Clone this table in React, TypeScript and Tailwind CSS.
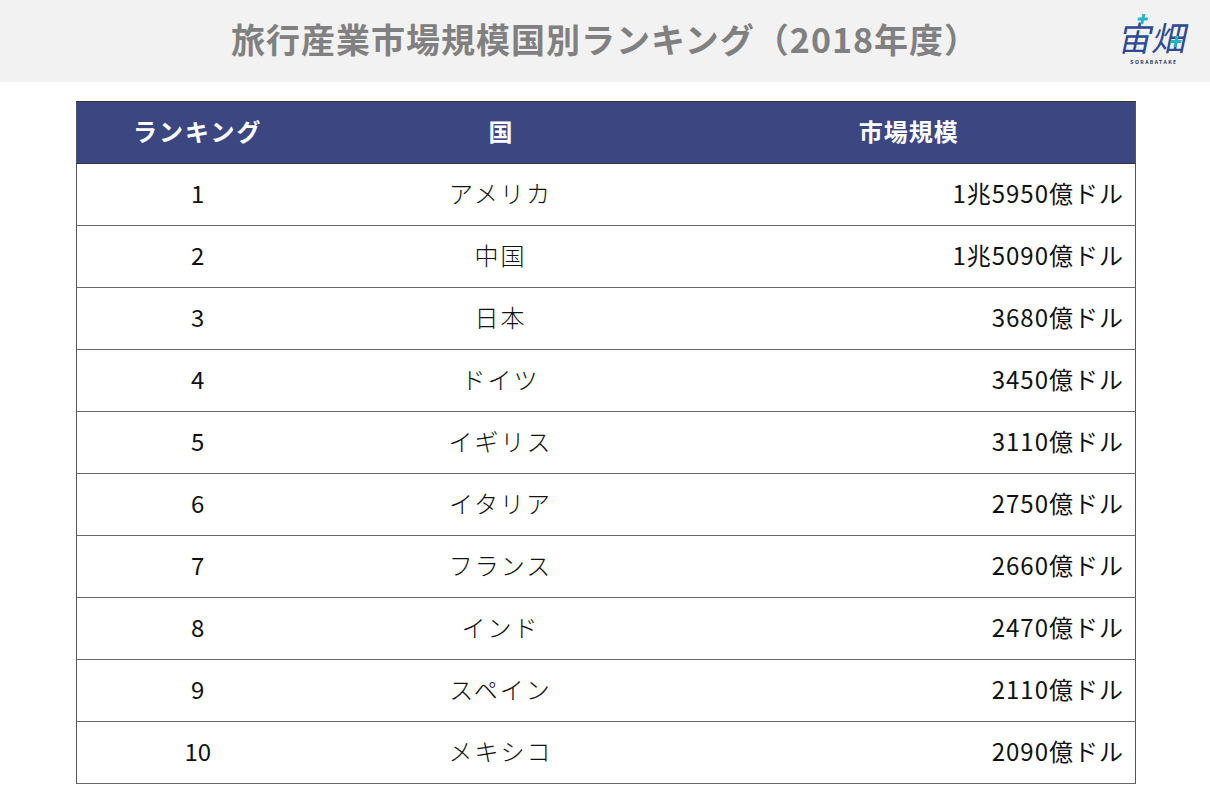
const rows = [
  { rank: 1, country: 'アメリカ', size: '1兆5950億ドル' },
  { rank: 2, country: '中国', size: '1兆5090億ドル' },
  { rank: 3, country: '日本', size: '3680億ドル' },
  { rank: 4, country: 'ドイツ', size: '3450億ドル' },
  { rank: 5, country: 'イギリス', size: '3110億ドル' },
  { rank: 6, country: 'イタリア', size: '2750億ドル' },
  { rank: 7, country: 'フランス', size: '2660億ドル' },
  { rank: 8, country: 'インド', size: '2470億ドル' },
  { rank: 9, country: 'スペイン', size: '2110億ドル' },
  { rank: 10, country: 'メキシコ', size: '2090億ドル' },
];

function Logo() {
  return (
    <div className="flex flex-col items-center pt-[4px]">
      <div className="relative text-[34px] leading-none text-[#2d4a92] -skew-x-12">
        宙畑
        {/* teal crosses over the characters */}
        <svg className="absolute -top-[6px] left-0 w-[70px] h-[44px]" viewBox="0 0 70 44">
          <path d="M19 0v10M14 5h10" stroke="#1fb8c8" strokeWidth="3" />
          <path d="M57 22v11M51.5 27.5h11" stroke="#1fb8c8" strokeWidth="3" />
        </svg>
      </div>
      <div className="mt-[4px] text-[5px] font-bold tracking-[1.5px] text-[#2a3560]">SORABATAKE</div>
    </div>
  );
}

export default function App() {
  return (
    <div
      className="w-[1210px] h-[805px] bg-white"
      style={{ fontFamily: '"Noto Sans CJK JP", "Noto Sans", sans-serif' }}
    >
      <header className="h-[82px] bg-[#f2f2f2] grid grid-cols-[1fr_auto_1fr] items-center">
        <div />
        <h1 className="pb-[5px] text-[34px] font-bold text-[#808080] tracking-[1px]">
          旅行産業市場規模国別ランキング（2018年度）
        </h1>
        <div className="justify-self-end pr-[22px]">
          <Logo />
        </div>
      </header>

      <div className="pt-[19px] pl-[76px]">
        <table className="w-[1060px] border-collapse border-x border-[#555] text-[24px] text-[#111]">
          <thead>
            <tr className="h-[62px] bg-[#3c4681] text-white border-y border-[#333]">
              <th className="w-[242px] pb-[4px] font-bold tracking-[2px]">ランキング</th>
              <th className="w-[364px] pb-[4px] font-bold">国</th>
              <th className="pb-[4px] font-bold tracking-[1px]">市場規模</th>
            </tr>
          </thead>
          <tbody>
            {rows.map((r) => (
              <tr key={r.rank} className="h-[62px] border-b border-[#666]">
                <td className="pb-[3px] text-center">{r.rank}</td>
                <td className="pb-[3px] text-center font-light tracking-[2px]">{r.country}</td>
                <td className="pb-[3px] text-right pr-[11px] tracking-[1px]">{r.size}</td>
              </tr>
            ))}
          </tbody>
        </table>
      </div>
    </div>
  );
}
